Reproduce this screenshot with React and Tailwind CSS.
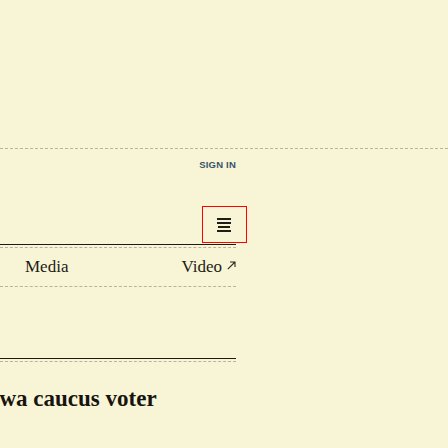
import React from "react";

const serif = { fontFamily: '"Liberation Serif", "Times New Roman", serif' };

const Hamburger = () => (
  <div className="flex flex-col items-center gap-[2px]">
    <span className="block w-[14px] h-[2px] bg-[#1f1d17]" />
    <span className="block w-[14px] h-[2px] bg-[#1f1d17]" />
    <span className="block w-[12px] h-[2px] bg-[#1f1d17]" />
    <span className="block w-[14px] h-[2px] bg-[#1f1d17]" />
  </div>
);

const ArrowUpRight = () => (
  <svg width="9" height="9" viewBox="0 0 9 9" className="ml-[5px] mb-[3px]">
    <path d="M0.8 8.2 L8 1 M3 1 H8 V6" stroke="#2a2822" strokeWidth="1.1" fill="none" />
  </svg>
);

export default function App() {
  return (
    <div className="w-[448px] h-[448px] overflow-hidden bg-[#f8f5d6] text-[#1d1b16]">
      <div className="h-[148px]" />
      <div className="border-t border-dashed border-[#b5b49e]" />

      <div className="w-[236px] flex justify-end pt-[10px]">
        <a
          className="text-[9.5px] leading-[12px] font-bold tracking-[0.2px] text-[#36546a] uppercase"
          style={{ fontFamily: '"Liberation Sans", Arial, sans-serif' }}
        >
          Sign in
        </a>
      </div>

      <div className="flex justify-center mt-[35px]">
        <button className="w-[45px] h-[37px] border border-[#ff0000] flex items-center justify-center">
          <Hamburger />
        </button>
      </div>

      <div className="w-[236px] border-t border-[#1d1b16] mt-[1px]" />
      <div className="w-[236px] border-t border-dashed border-[#b5b49e] mt-[2px]" />

      <nav
        className="w-[236px] flex justify-between items-center pl-[25px] py-[7px] text-[17px] leading-[24px]"
        style={serif}
      >
        <span>Media</span>
        <span className="flex items-center">
          Video
          <ArrowUpRight />
        </span>
      </nav>
      <div className="w-[236px] border-t border-dashed border-[#b5b49e]" />

      <div className="w-[236px] border-t border-[#1d1b16] mt-[71px]" />
      <div className="w-[236px] border-t border-dashed border-[#b5b49e] mt-[2px]" />

      <div className="flex mt-[23px] ml-[-21px]">
        <h2
          className="text-[23px] leading-[28px] font-bold whitespace-nowrap text-[#16140f]"
          style={serif}
        >
          Iowa caucus voter
        </h2>
      </div>
    </div>
  );
}
